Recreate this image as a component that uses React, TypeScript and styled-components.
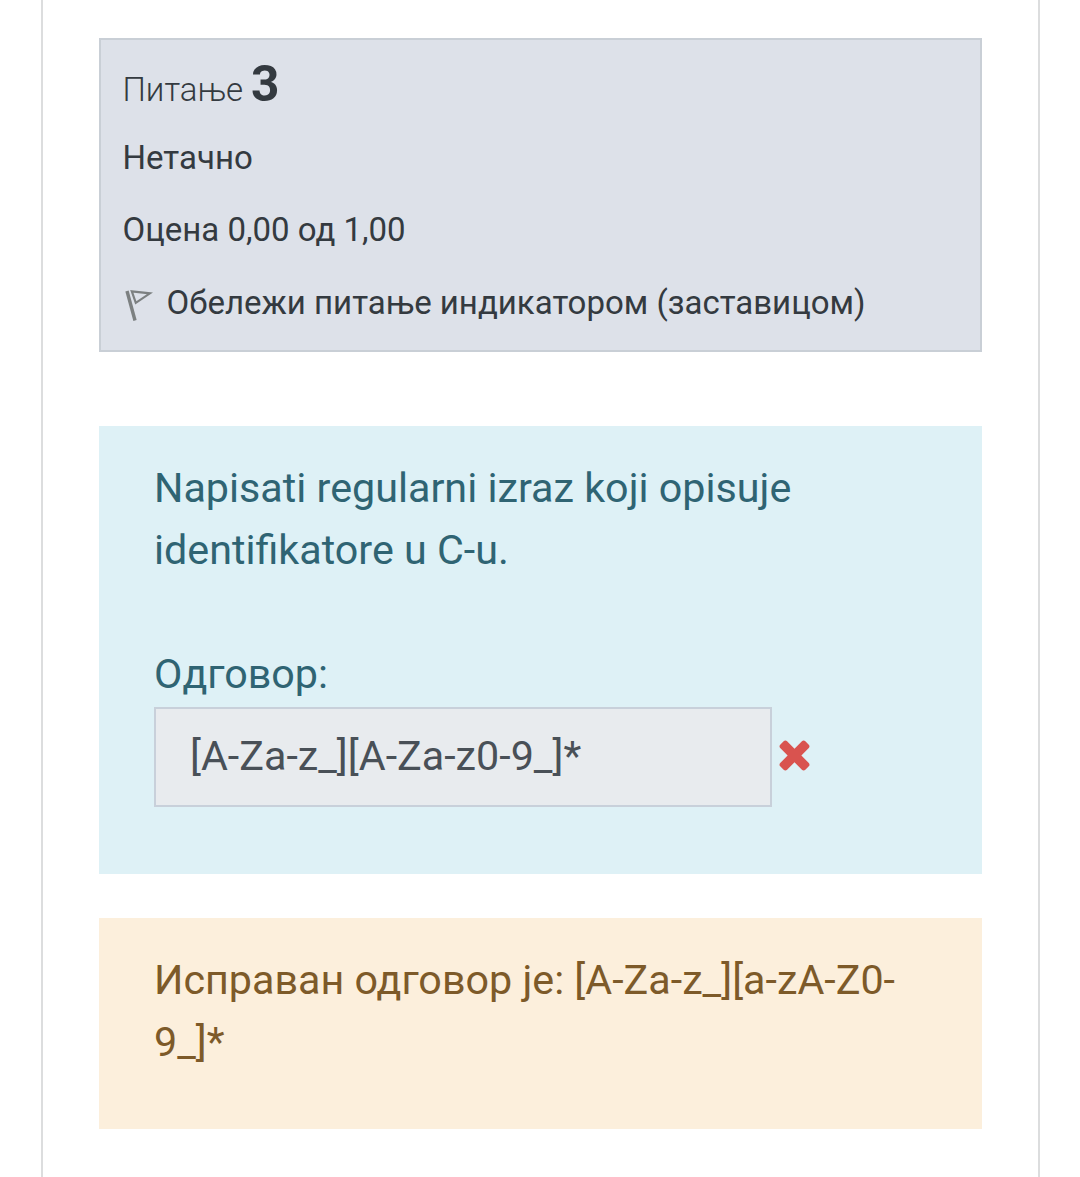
import React from "react";
import styled, { createGlobalStyle } from "styled-components";

const GlobalStyle = createGlobalStyle`
  * { box-sizing: border-box; }
  body {
    margin: 0;
    background: #fff;
    font-family: Roboto, "Noto Sans", sans-serif;
  }
`;

const Page = styled.main`
  width: 999px;
  height: 1177px;
  margin-left: 41px;
  padding: 38px 56px 0;
  border: solid #dcddde;
  border-width: 0 2px;
  background: #fff;
  overflow: hidden;
`;

const Info = styled.section`
  height: 314px;
  padding: 19px 21.5px 0;
  border: 2px solid #c9cfd6;
  background: #dde1e9;
  color: #343a40;
  font-size: 33px;
  line-height: 50px;
`;

const Title = styled.h3`
  display: flex;
  align-items: baseline;
  gap: 8px;
  height: 52px;
  margin: 0 0 22px;
  font-size: 33px;
  font-weight: 300;
  line-height: 50px;
`;

const Number = styled.span`
  font-size: 49.5px;
  font-weight: 700;
`;

const InfoRow = styled.div`
  display: flex;
  align-items: center;
  height: 50px;
  margin-bottom: 22.4px;
  white-space: nowrap;
`;

const FlagIcon = styled.svg`
  width: 30px;
  height: 34px;
  margin: 4px 14px 0 0;
`;

const Panel = styled.section<{ $bg: string; $color: string; $height: number; $top: number }>`
  height: ${(p) => p.$height}px;
  margin-top: ${(p) => p.$top}px;
  padding: 32px 55px 0;
  background: ${(p) => p.$bg};
  color: ${(p) => p.$color};
  font-size: 41.25px;
  line-height: 61.875px;
`;

const Paragraph = styled.p`
  margin: 0 0 61.875px;
`;

const Label = styled.label`
  display: block;
`;

const AnswerRow = styled.div`
  display: flex;
  align-items: center;
  gap: 7px;
  margin-top: 1.5px;
`;

const AnswerField = styled.div`
  width: 618px;
  height: 100px;
  padding: 17px 34px;
  border: 2px solid #c8d0da;
  background: #e8ebee;
  color: #495057;
`;

const CrossIcon = styled.svg`
  width: 31px;
  height: 31px;
  margin-top: -3px;
  fill: #d9534f;
`;

export default function App() {
  return (
    <>
      <GlobalStyle />
      <Page>
        <Info>
          <Title>
            Питање <Number>3</Number>
          </Title>
          <InfoRow>Нетачно</InfoRow>
          <InfoRow>Оцена 0,00 од 1,00</InfoRow>
          <InfoRow>
            <FlagIcon viewBox="0 0 30 34" fill="none">
              <path d="M4 3L12 32.5" stroke="#7c8081" strokeWidth="3.4" />
              <path d="M8.8 3.3L27 5.3L12.8 14.8Z" stroke="#7c8081" strokeWidth="2.2" />
            </FlagIcon>
            Обележи питање индикатором (заставицом)
          </InfoRow>
        </Info>
        <Panel $bg="#def1f6" $color="#2f6473" $height={448} $top={74}>
          <Paragraph>Napisati regularni izraz koji opisuje identifikatore u C-u.</Paragraph>
          <Label>Одговор:</Label>
          <AnswerRow>
            <AnswerField>[A-Za-z_][A-Za-z0-9_]*</AnswerField>
            <CrossIcon viewBox="282 346 1228 1228">
              <path d="M1490 1322q0 40-28 68l-136 136q-28 28-68 28t-68-28l-294-294-294 294q-28 28-68 28t-68-28l-136-136q-28-28-28-68t28-68l294-294-294-294q-28-28-28-68t28-68l136-136q28-28 68-28t68 28l294 294 294-294q28-28 68-28t68 28l136 136q28 28 28 68t-28 68l-294 294 294 294q28 28 28 68z" />
            </CrossIcon>
          </AnswerRow>
        </Panel>
        <Panel $bg="#fcefdc" $color="#7d5a29" $height={211} $top={44}>
          Исправан одговор је: [A-Za-z_][a-zA-Z0-9_]*
        </Panel>
      </Page>
    </>
  );
}
